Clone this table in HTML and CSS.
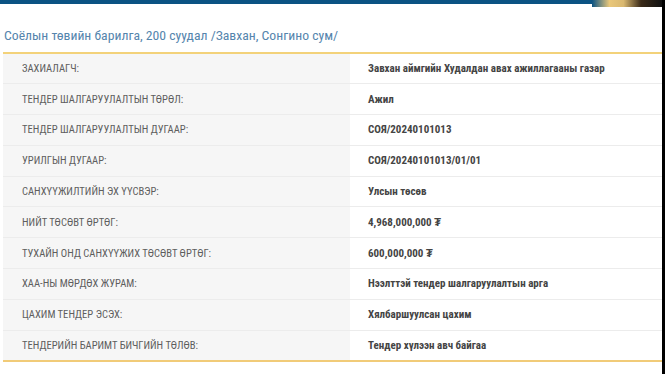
FILE: index.html
```html
<!DOCTYPE html>
<html lang="mn">
<head>
<meta charset="utf-8">
<link rel="stylesheet" href="styles.css">
</head>
<body>
<div class="page">
  <div class="main">
    <div class="topbar"><div class="topimg"></div></div>
    <h1 class="title">Соёлын төвийн барилга, 200 суудал /Завхан, Сонгино сум/</h1>
    <table class="info">
      <tr><th>ЗАХИАЛАГЧ:</th><td>Завхан аймгийн Худалдан авах ажиллагааны газар</td></tr>
      <tr><th>ТЕНДЕР ШАЛГАРУУЛАЛТЫН ТӨРӨЛ:</th><td>Ажил</td></tr>
      <tr><th>ТЕНДЕР ШАЛГАРУУЛАЛТЫН ДУГААР:</th><td>СОЯ/20240101013</td></tr>
      <tr><th>УРИЛГЫН ДУГААР:</th><td>СОЯ/20240101013/01/01</td></tr>
      <tr><th>САНХҮҮЖИЛТИЙН ЭХ ҮҮСВЭР:</th><td>Улсын төсөв</td></tr>
      <tr><th>НИЙТ ТӨСӨВТ ӨРТӨГ:</th><td>4,968,000,000 ₮</td></tr>
      <tr><th>ТУХАЙН ОНД САНХҮҮЖИХ ТӨСӨВТ ӨРТӨГ:</th><td>600,000,000 ₮</td></tr>
      <tr><th>ХАА-НЫ МӨРДӨХ ЖУРАМ:</th><td>Нээлттэй тендер шалгаруулалтын арга</td></tr>
      <tr><th>ЦАХИМ ТЕНДЕР ЭСЭХ:</th><td>Хялбаршуулсан цахим</td></tr>
      <tr><th>ТЕНДЕРИЙН БАРИМТ БИЧГИЙН ТӨЛӨВ:</th><td>Тендер хүлээн авч байгаа</td></tr>
    </table>
  </div>
  <div class="edge"></div>
</div>
</body>
</html>
```
FILE: styles.css
```css
html, body {
  margin: 0;
  padding: 0;
  background: #fff;
}
.page {
  display: flex;
  width: 665px;
  height: 374px;
  overflow: hidden;
}
.main {
  flex: 1;
  min-width: 0;
}
.edge {
  width: 3px;
  background: #000;
}
.topbar {
  height: 4px;
  background: #0b5383;
  display: flex;
  justify-content: flex-end;
}
.topimg {
  width: 70px;
  height: 7px;
  background: linear-gradient(90deg, #0b5383 0%, #e9c77a 25%, #d9b870 45%, #3a2a18 70%, #111 100%);
}
.title {
  margin: 22px 0 0 4px;
  height: 26px;
  font-family: "Roboto Condensed", "Roboto", sans-serif;
  font-weight: normal;
  font-size: 13.7px;
  line-height: 18px;
  color: #5585ad;
}
.info {
  margin-left: 3px;
  width: 659px;
  border-collapse: collapse;
  border-top: 2px solid #f3d27a;
  border-bottom: 2px solid #f1cb78;
  font-family: "Roboto Condensed", "Roboto", sans-serif;
}
.info tr {
  height: 30.8px;
}
.info tr + tr th,
.info tr + tr td {
  border-top: 1px solid #ececec;
}
.info th {
  width: 328px;
  padding: 0 0 0 19px;
  text-align: left;
  background: #f6f6f6;
  font-weight: normal;
  font-size: 10.6px;
  color: #5e5e5e;
}
.info td {
  padding: 0 0 0 18px;
  font-size: 11px;
  font-weight: bold;
  color: #444;
}
```
